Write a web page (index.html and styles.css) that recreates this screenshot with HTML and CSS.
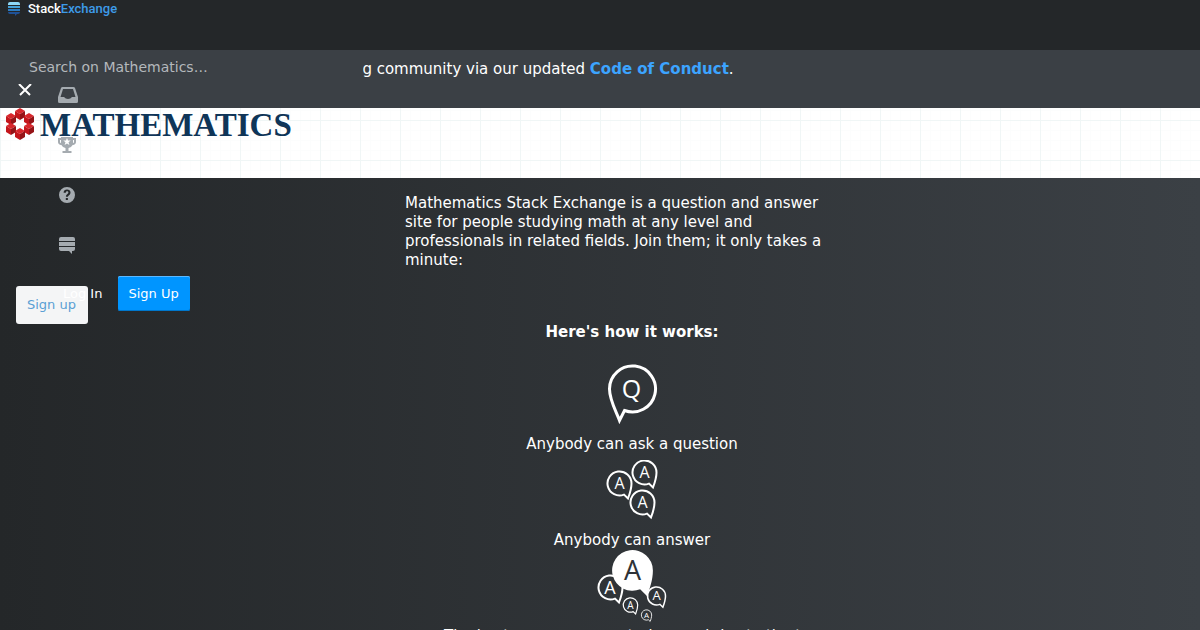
FILE: index.html
```html
<!DOCTYPE html>
<html lang="en">
<head>
<meta charset="utf-8">
<title>Mathematics Stack Exchange</title>
<link rel="stylesheet" href="styles.css">
</head>
<body>
<header class="topbar">
  <a class="network" href="#">
    <svg class="network-mark" viewBox="0 0 12 14" aria-hidden="true">
      <path fill="#8fd8f7" d="M0 3V2Q0 0 2 0h8q2 0 2 2v1z"/>
      <path fill="#46a2d9" d="M0 4h12v2H0z"/>
      <path fill="#2d7cc0" d="M0 7h12v2H0z"/>
      <path fill="#1f5196" d="M0 10h12q0 2-2 2H9l-2 2v-2H2q-2 0-2-2z"/>
    </svg>
    <span class="network-name">Stack<span class="network-accent">Exchange</span></span>
  </a>
  <nav class="tools" aria-label="Site tools">
    <form class="search"><input class="search-input" type="text" placeholder="Search on Mathematics…" aria-label="Search on Mathematics"></form>
    <ul class="tool-list">
      <li><a class="tool" href="#" aria-label="Inbox"><svg width="20" height="18" viewBox="0 0 20 18"><path fill-rule="evenodd" d="M4.600 1h10.800q1.200 0 1.600 1.100L20 11v4.500q0 1.500-1.500 1.500h-17Q0 17 0 15.500V11L3 2.100Q3.400 1 4.600 1zM5 3 2.500 11H6q1.500 2 4 2t4-2h3.500L15 3z"/></svg></a></li>
      <li><a class="tool" href="#" aria-label="Achievements"><svg width="18" height="18" viewBox="0 0 18 18"><path fill-rule="evenodd" d="M15 2V1H3v1H0v4c0 1.600 1.400 3 3 3h.4c.8 1.500 2.300 2.600 4.100 2.900V15H4.500v2h9v-2h-3v-3.100c1.800-.3 3.300-1.400 4.100-2.900h.4c1.600 0 3-1.400 3-3V2zM3 7c-.5 0-1-.5-1-1V4h1zm8.400 2L9 7.500 6.600 9l.9-2.700-2.200-1.700H8l1-2.600 1 2.600h2.700l-2.200 1.700zM16 6c0 .5-.5 1-1 1V4h1z"/></svg></a></li>
      <li><a class="tool" href="#" aria-label="Help"><svg width="18" height="18" viewBox="0 0 18 18"><path fill-rule="evenodd" d="M9 1a8 8 0 1 0 0 16A8 8 0 0 0 9 1zm.9 12.900H7.800v-2h2.100zm1.700-5.200c-.8.800-1.600 1-1.700 2.100H7.900c0-1.700.8-2.300 1.500-2.900.7-.5 1-.8 1-1.400 0-.8-.6-1.200-1.300-1.200-.8 0-1.300.6-1.300 1.500H5.600C5.700 4.700 7 3.600 9 3.600s3.500 1.100 3.500 2.800c0 .9-.3 1.600-.9 2.300z"/></svg></a></li>
      <li><a class="tool" href="#" aria-label="Communities"><svg width="18" height="18" viewBox="0 0 18 18"><path d="M1 5V3q0-2 2-2h12q2 0 2 2v2zM1 6h16v4H1zM1 11h16v2q0 2-2 2h-1v3l-3-3H3q-2 0-2-2z"/></svg></a></li>
    </ul>
    <div class="account">
      <a class="login" href="#">Log In</a>
      <a class="signup" href="#">Sign Up</a>
    </div>
  </nav>
</header>
<section class="notice">
  <p class="notice-text">Join us in building a kind, collaborative learning community via our updated <a class="notice-link" href="#">Code of Conduct</a>.</p>
  <button class="close" type="button" aria-label="Dismiss"><svg width="14" height="14" viewBox="0 0 14 14"><path d="M1 1l11 11M13 1 2 12" stroke="#fff" stroke-width="2" fill="none"/></svg></button>
</section>
<div class="site">
  <a class="site-link" href="#">
    <svg class="site-mark" viewBox="0 0 28 32" aria-hidden="true">
      <defs><g id="cube"><path fill="#d8262b" d="M0-6 5-3 0 0-5-3z"/><path fill="#c4161c" d="M-5-3 0 0v6l-5-3z"/><path fill="#951317" d="M5-3 0 0v6l5-3z"/></g></defs>
      <use href="#cube" x="14" y="6"/><use href="#cube" x="5" y="11"/><use href="#cube" x="23" y="11"/>
      <use href="#cube" x="5" y="21"/><use href="#cube" x="23" y="21"/><use href="#cube" x="14" y="26"/>
    </svg>
    <span class="site-name">MATHEMATICS</span>
  </a>
</div>
<main class="hero">
  <div class="join"><a class="join-button" href="#">Sign up</a></div>
  <div class="intro">
    <p class="blurb">Mathematics Stack Exchange is a question and answer site for people studying math at any level and professionals in related fields. Join them; it only takes a minute:</p>
    <h2 class="how">Here's how it works:</h2>
    <ol class="steps">
      <li class="step step-ask">
        <svg width="52" height="60" viewBox="0 0 52 60" aria-hidden="true"><path fill="none" stroke="#fff" stroke-width="3" d="M18.500 46.500A23 23 0 1 0 3.500 25c0 11 6.500 22 10 31.500z"/><text class="glyph" x="25.500" y="34" font-size="25">Q</text></svg>
        <span>Anybody can ask a question</span>
      </li>
      <li class="step step-answer">
        <svg width="52" height="62" viewBox="0 0 52 62" aria-hidden="true">
          <defs><path id="bubble" d="M4.500 11.100A12 12 0 1 1 12 0C12 5.500 10 11 8.500 15z"/></defs>
          <g class="outline"><use href="#bubble" x="13.500" y="23.500"/><use href="#bubble" x="38.500" y="12.500"/><use href="#bubble" x="36.500" y="42.500"/></g>
          <text class="glyph" x="13.500" y="29" font-size="16">A</text><text class="glyph" x="38.500" y="18" font-size="16">A</text><text class="glyph" x="36.500" y="48" font-size="16">A</text>
        </svg>
        <span>Anybody can answer</span>
      </li>
      <li class="step step-vote">
        <svg width="70" height="74" viewBox="0 0 70 74" aria-hidden="true">
          <g class="outline"><use href="#bubble" x="13.500" y="37.500"/><use href="#bubble" transform="translate(59.500 46) scale(.75)"/><use href="#bubble" transform="translate(33.500 55) scale(.6)"/><use href="#bubble" transform="translate(49.500 65) scale(.43)"/></g>
          <use href="#bubble" transform="translate(35.500 20.500) scale(1.700)" fill="#fff"/>
          <text class="glyph" x="13" y="44" font-size="18">A</text><text class="glyph glyph-dark" x="35.500" y="30" font-size="27">A</text><text class="glyph" x="59.500" y="50" font-size="13">A</text><text class="glyph" x="33.500" y="59" font-size="10">A</text><text class="glyph" x="49.500" y="68" font-size="8">A</text>
        </svg>
        <span>The best answers are voted up and rise to the top</span>
      </li>
    </ol>
  </div>
</main>
</body>
</html>
```
FILE: styles.css
```css
body { margin: 0; background: #242729; color: #fff; font: 15px/19px "DejaVu Sans", sans-serif; }
p, h2, ol, ul { margin: 0; padding: 0; }
ol, ul { list-style: none; }
a { color: inherit; text-decoration: none; }
svg { display: block; }

.topbar { position: relative; z-index: 2; height: 50px; background: #242729; }
.network { display: flex; align-items: flex-start; gap: 8px; padding: 1px 8px; }
.network-mark { width: 12px; height: 14px; margin-top: 1px; }
.network-name { font: 500 13px/15px Roboto, sans-serif; }
.network-accent { color: #3d9be9; }

/* Tools drop down over the page below the bar */
.tools { position: absolute; top: 50px; left: 0; width: 363px; }
.search-input { display: block; box-sizing: border-box; width: 100%; height: 34px; padding: 0 29px; border: 0; background: #3b4045; color: #fff; font: 14px "DejaVu Sans", sans-serif; }
.search-input::placeholder { color: #b4b8bc; opacity: 1; }
.tool-list { padding-left: 58px; }
.tool { display: flex; align-items: center; height: 50px; fill: #a5abb0; }
.tool-list li:first-child .tool { height: 22px; margin-bottom: 14px; }
.account { display: flex; align-items: center; gap: 16px; padding: 6px 0 0 63px; font-size: 13px; }
.signup { padding: 8px 11px 8px 10px; border-radius: 2px; background: #0095ff; box-shadow: inset 0 1px #5cb8ff, inset 0 -1px #07c; }

.notice { box-sizing: border-box; height: 58px; padding: 10px 18px 0 16px; background: #3b4045; }
.notice-link { color: #3ca4ff; font-weight: bold; }
.close { display: block; margin: 4px 0 0 2px; padding: 0; border: 0; background: none; }

.site {
  height: 70px;
  background:
    linear-gradient(#f0f6f6 1px, transparent 1px) 0 12px / 40px 40px,
    linear-gradient(90deg, #f0f6f6 1px, transparent 1px) 0 0 / 40px 40px,
    linear-gradient(#fcfdfd 1px, transparent 1px) 0 2px / 10px 10px,
    linear-gradient(90deg, #fcfdfd 1px, transparent 1px) 0 0 / 10px 10px,
    #fff;
}
.site-link { display: inline-flex; align-items: flex-start; gap: 6px; padding-left: 6px; }
.site-mark { width: 28px; height: 32px; }
.site-name { color: #0f3558; font: bold 33px/34px "Liberation Serif", serif; }

.hero { position: relative; padding-top: 16px; background: linear-gradient(90deg, #242729, #3b4045); }
.join { position: absolute; top: 108px; left: 16px; font-size: 13px; }
.join-button { display: block; padding: 9px 12px 9px 11px; border-radius: 3px; background: #f4f5f6; color: #5a9fd4; line-height: 20px; }
.intro { width: 454px; margin: 0 auto; padding-left: 64px; }
.blurb { padding-right: 14px; }
.how { margin-top: 53px; font-size: 15px; text-align: center; }
.steps { margin-top: 22px; text-align: center; }
.step { display: flex; flex-direction: column; align-items: center; }
.step-ask svg { margin-bottom: 11px; }
.step-answer svg { margin: 6px 0 9px; }
.step-vote svg { margin-bottom: 3px; }
.outline { fill: none; stroke: #fff; stroke-width: 2px; }
.glyph { fill: #fff; font-family: "Open Sans", sans-serif; text-anchor: middle; }
.glyph-dark { fill: #2f3337; }
```
